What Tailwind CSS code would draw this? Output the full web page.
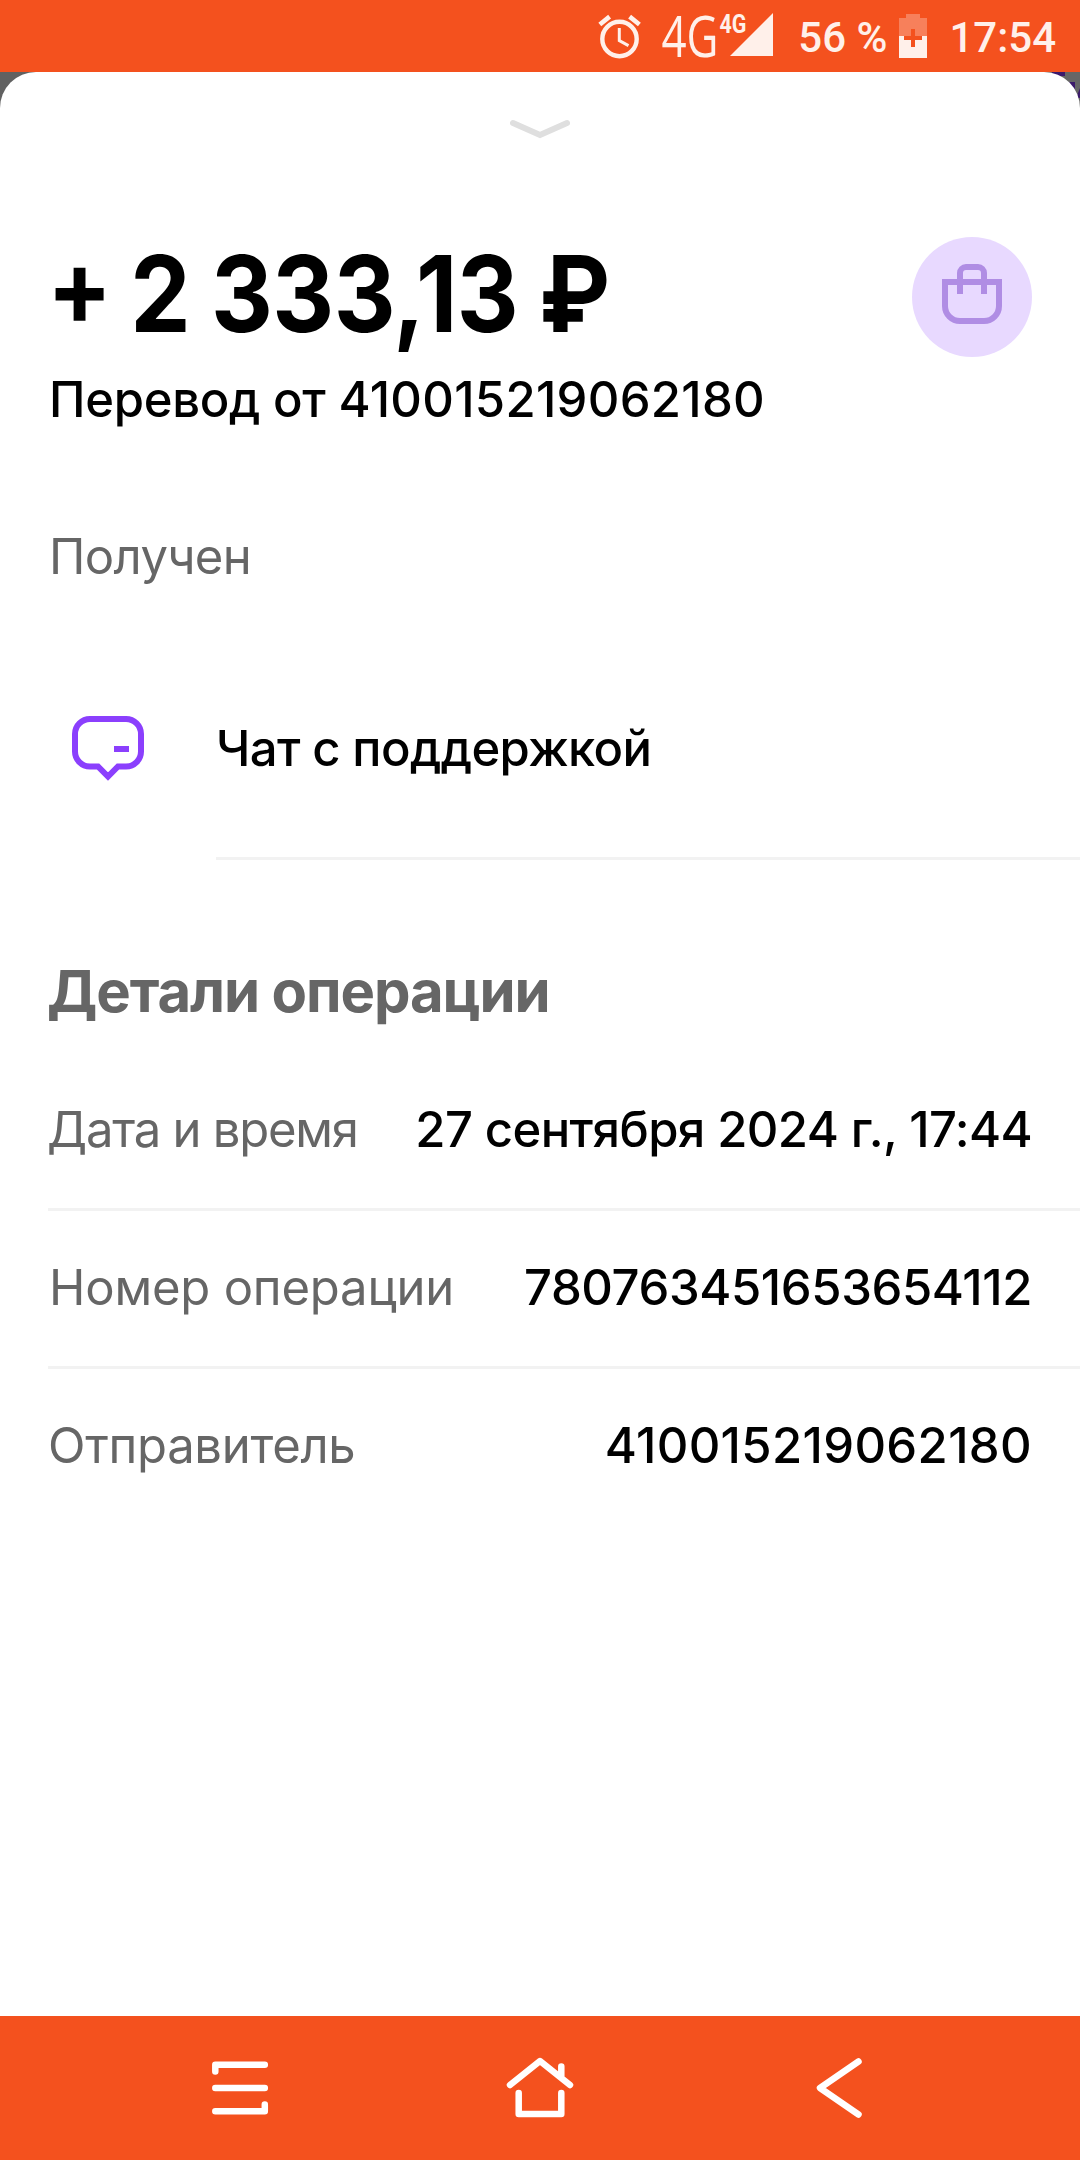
<!DOCTYPE html>
<html lang="ru">
<head>
  <meta charset="UTF-8" />
  <title>Детали операции</title>
  <meta name="viewport" content="width=device-width, initial-scale=1.0" />
  <script src="https://cdn.jsdelivr.net/npm/@tailwindcss/browser@4"></script>
</head>
<body class="bg-[#616161] font-['Inter',sans-serif] text-black">
  <div class="w-[1080px] h-[2160px] flex flex-col overflow-hidden">

    <!-- Status bar -->
    <header class="h-[72px] shrink-0 bg-[#f4511e] text-[#fff0ea] flex items-center justify-end pr-[24px] font-['Roboto',sans-serif] font-medium text-[42px]">
      <svg class="w-[44px] h-[72px]" viewBox="597 0 44 72" fill="none" stroke="currentColor">
        <circle cx="619.5" cy="39" r="17.2" stroke-width="4.4" />
        <path d="M599.8 24.5L609.6 16.6M639.4 24.5L629.6 16.6" stroke-width="4.6" />
        <path d="M619.3 28V40.6L628.5 45.6" stroke-width="3" />
      </svg>
      <svg class="w-[114px] h-[72px] ml-[18px] overflow-visible" viewBox="659 0 114 72" fill="currentColor">
        <text x="661.5" y="57" font-family="Open Sans" font-weight="400" font-size="56" textLength="57" lengthAdjust="spacingAndGlyphs">4G</text>
        <text x="719.5" y="32.5" font-family="Roboto" font-weight="700" font-size="26" textLength="27" lengthAdjust="spacingAndGlyphs">4G</text>
        <path d="M730 56L773 13V56Z" />
      </svg>
      <span class="ml-[25px] mt-[2px]">56 %</span>
      <svg class="w-[28px] h-[72px] ml-[12px]" viewBox="899 0 28 72" fill="currentColor">
        <path d="M906 14H920V18H927V36H899V18H906Z" opacity=".3" />
        <path d="M899 36H927V58H899Z" />
        <path d="M911 29H915V36H922V40H915V47H911V40H904V36H911Z" fill="#f4511e" />
      </svg>
      <span class="ml-[22px] mt-[2px]">17:54</span>
    </header>

    <div class="relative grow flex">
      <!-- Dimmed screen behind the sheet -->
      <svg class="absolute top-0 right-0 w-[40px] h-[40px]" viewBox="0 0 40 40" fill="#3b1a6b">
        <rect width="40" height="40" fill="#666666" />
        <path d="M12 0H25V4H12ZM29 10H35V17H29ZM40 16V26H36Z" />
      </svg>

      <!-- Bottom sheet -->
      <main class="relative grow bg-white rounded-t-[36px]">
        <div class="h-[165px] flex justify-center pt-[46px]">
          <svg class="w-[60px] h-[22px]" viewBox="0 0 60 22" fill="none" stroke="#dfdfdf" stroke-width="6" stroke-linecap="round">
            <path d="M3 5L30 17L57 5" />
          </svg>
        </div>

        <div class="h-[120px] flex justify-between px-[48px]">
          <h1 class="text-[106px] leading-[108px] font-bold tracking-[-0.6px] [word-spacing:-1.5px] whitespace-nowrap origin-left scale-x-[0.905] -ml-px -mt-[3px]"><span class="leading-none align-[7px] tracking-[-3px]">+</span> 2 333,13 ₽</h1>
          <div class="size-[120px] rounded-full bg-[#e8d9ff] flex items-center justify-center">
            <svg class="size-[60px] mb-[6px]" viewBox="0 0 60 60" fill="none" stroke="#b08de4" stroke-width="6">
              <path d="M3 18H57V42A15 15 0 0 1 42 57H18A15 15 0 0 1 3 42Z" />
              <path d="M18 30V9A6 6 0 0 1 24 3H36A6 6 0 0 1 42 9V30" />
            </svg>
          </div>
        </div>
        <p class="mt-[13px] px-[49px] text-[49px] leading-[60px] font-medium whitespace-nowrap"><span class="tracking-[-0.3px]">Перевод от</span> <span class="tracking-[0.3px]">410015219062180</span></p>
        <p class="mt-[97px] px-[49px] text-[49px] leading-[60px] tracking-[-0.6px] text-[#666666]">Получен</p>

        <div class="mt-[52px] flex">
          <div class="w-[216px] flex items-center justify-center">
            <svg class="w-[72px] h-[66px] mb-[2px]" viewBox="72 716 72 66" fill="none" stroke="#8b3ffd" stroke-width="6">
              <path d="M90 719H126A15 15 0 0 1 141 734V751.500A15 15 0 0 1 126 766.500H118L108 776.500L98 766.500H90A15 15 0 0 1 75 751.500V734A15 15 0 0 1 90 719Z" />
              <path d="M114 749H129" />
            </svg>
          </div>
          <div class="grow h-[221px] pt-[2px] border-b-[3px] border-[#f2f2f2] flex items-center text-[49px] font-medium tracking-[-0.64px]">Чат с поддержкой</div>
        </div>

        <h2 class="mt-[96px] px-[47px] text-[58px] leading-[70px] font-bold tracking-[-1.1px] text-[#666666]">Детали операции</h2>

        <dl class="mt-[27px] ml-[48px] text-[49px] whitespace-nowrap">
          <div class="h-[158px] border-b-[3px] border-[#f2f2f2] pr-[48px] pb-[1px] flex items-center justify-between">
            <dt class="text-[#666666] tracking-[-1.25px] -ml-px">Дата и время</dt>
            <dd class="font-medium tracking-[-0.6px]">27 сентября 2024 г., 17:44</dd>
          </div>
          <div class="h-[158px] border-b-[3px] border-[#f2f2f2] pr-[48px] pb-[1px] flex items-center justify-between">
            <dt class="text-[#666666] tracking-[-0.2px] ml-px">Номер операции</dt>
            <dd class="font-medium tracking-[-0.4px]">780763451653654112</dd>
          </div>
          <div class="h-[158px] pr-[48px] pb-[5px] flex items-center justify-between">
            <dt class="text-[#666666] tracking-[-0.3px]">Отправитель</dt>
            <dd class="font-medium tracking-[0.35px]">410015219062180</dd>
          </div>
        </dl>
      </main>
    </div>

    <!-- Navigation bar -->
    <nav class="h-[144px] shrink-0 bg-[#f4511e] px-[90px] grid grid-cols-3 items-center justify-items-center">
      <svg class="w-[60px] h-[64px]" viewBox="210 2056 60 64" fill="none" stroke="#fff" stroke-width="6.500" stroke-linecap="round" stroke-linejoin="round">
        <path d="M215.300 2071.500V2064.700H264.800M215.300 2088H264.800M215.300 2111.200H264.800V2104.500" />
      </svg>
      <svg class="w-[68px] h-[64px]" viewBox="506 2056 68 64" fill="none" stroke="#fff" stroke-width="6.500" stroke-linecap="round" stroke-linejoin="round">
        <path d="M510 2085L540 2061L570 2085M561.300 2066.500V2077M518.700 2093V2114H561.300V2093" />
      </svg>
      <svg class="w-[50px] h-[64px]" viewBox="815 2056 50 64" fill="none" stroke="#fff" stroke-width="6.500" stroke-linecap="round" stroke-linejoin="round">
        <path d="M858.500 2061.500L820 2088L858.500 2114.500" />
      </svg>
    </nav>
  </div>
</body>
</html>
